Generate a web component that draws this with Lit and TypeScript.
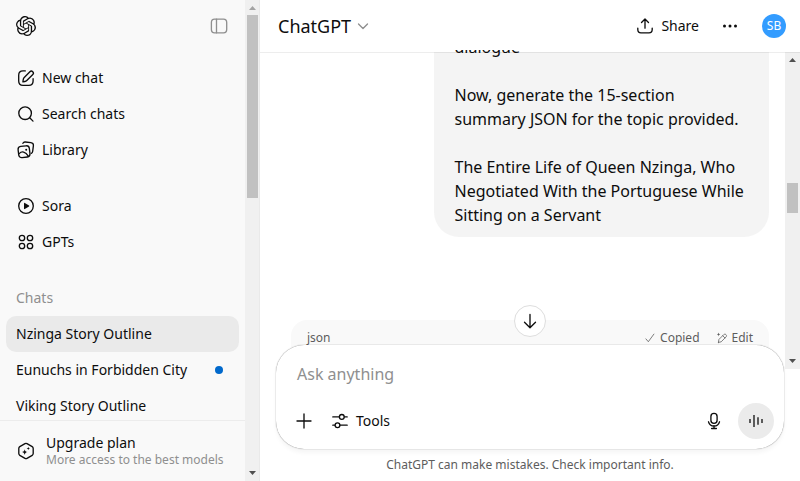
import { LitElement, html, css, svg } from "lit";
import { customElement } from "lit/decorators.js";

const LOGO =
  "M22.2819 9.8211a5.9847 5.9847 0 0 0-.5157-4.9108 6.0462 6.0462 0 0 0-6.5098-2.9A6.0651 6.0651 0 0 0 4.9807 4.1818a5.9847 5.9847 0 0 0-3.9977 2.9 6.0462 6.0462 0 0 0 .7427 7.0966 5.98 5.98 0 0 0 .511 4.9107 6.051 6.051 0 0 0 6.5146 2.9001A5.9847 5.9847 0 0 0 13.2599 24a6.0557 6.0557 0 0 0 5.7718-4.2058 5.9894 5.9894 0 0 0 3.9977-2.9001 6.0557 6.0557 0 0 0-.7475-7.0729zm-9.022 12.6081a4.4755 4.4755 0 0 1-2.8764-1.0408l.1419-.0804 4.7783-2.7582a.7948.7948 0 0 0 .3927-.6813v-6.7369l2.02 1.1686a.071.071 0 0 1 .038.052v5.5826a4.504 4.504 0 0 1-4.4945 4.4944zm-9.6607-4.1254a4.4708 4.4708 0 0 1-.5346-3.0137l.142.0852 4.783 2.7582a.7712.7712 0 0 0 .7806 0l5.8428-3.3685v2.3324a.0804.0804 0 0 1-.0332.0615L9.74 19.9502a4.4992 4.4992 0 0 1-6.1408-1.6464zM2.3408 7.8956a4.485 4.485 0 0 1 2.3655-1.9728V11.6a.7664.7664 0 0 0 .3879.6765l5.8144 3.3543-2.0201 1.1685a.0757.0757 0 0 1-.071 0l-4.8303-2.7865A4.504 4.504 0 0 1 2.3408 7.872zm16.5963 3.8558L13.1038 8.364 15.1192 7.2a.0757.0757 0 0 1 .071 0l4.8303 2.7913a4.4944 4.4944 0 0 1-.6765 8.1042v-5.6772a.79.79 0 0 0-.407-.667zm2.0107-3.0231l-.142-.0852-4.7735-2.7818a.7759.7759 0 0 0-.7854 0L9.409 9.2297V6.8974a.0662.0662 0 0 1 .0284-.0615l4.8303-2.7866a4.4992 4.4992 0 0 1 6.6802 4.66zM8.3065 12.863l-2.02-1.1638a.0804.0804 0 0 1-.038-.0567V6.0742a4.4992 4.4992 0 0 1 7.3757-3.4537l-.142.0805L8.704 5.459a.7948.7948 0 0 0-.3927.6813zm1.0976-2.3654l2.602-1.4998 2.6069 1.4998v2.9994l-2.5974 1.4997-2.6067-1.4997Z";

// Glyphs are drawn on a 20x20 grid with a 1.33 stroke.
const glyphs = {
  panel: svg`<rect x="2.4" y="3.2" width="15.3" height="13.6" rx="3.2"/><path d="M7.500 3.2v13.6"/>`,
  edit: svg`<path d="M9.3 2.9H7C4.3 2.9 2.7 4.500 2.700 7.200V13c0 2.700 1.600 4.300 4.300 4.300h5.800c2.700 0 4.300-1.600 4.300-4.300v-2.300"/><path d="M8 9.700l5.900-6a2 2 0 0 1 2.900 2.800l-6 6c-.5.500-1.200.900-1.900 1l-2 .300.300-2c.100-.8.300-1.600.8-2.100z"/>`,
  search: svg`<circle cx="9.100" cy="9.200" r="6.300"/><path d="M13.700 13.800L17.000 17.100"/>`,
  library: svg`<rect x="2.400" y="6.100" width="11.300" height="11.300" rx="3" transform="rotate(-7 8 11.800)"/><path d="M6.900 3.300c.5-1 1.300-1.400 2.300-1.300l5.700.6c1.700.2 2.700 1.300 2.500 3l-.7 5.600c-.1 1-.5 1.700-1.300 2.100"/><path d="M3.200 13.600c2.500-2.600 6.200-2.400 9.300 2.800"/><circle class="solid" cx="10.200" cy="9.800" r="1.000"/>`,
  play: svg`<circle cx="10" cy="10" r="7.300"/><path class="solid" d="M8 7.400v5.200c0 .5.400.7.800.5l4.200-2.600c.4-.3.400-.7 0-1L8.800 6.900c-.4-.2-.8 0-.8.500z"/>`,
  grid: svg`<circle cx="6" cy="6" r="2.700"/><circle cx="14" cy="6" r="2.700"/><circle cx="6" cy="14" r="2.700"/><circle cx="14" cy="14" r="2.700"/>`,
  upgrade: svg`<path d="M9 2.700a2 2 0 0 1 2 0l5.200 3a2 2 0 0 1 1 1.700v5.200a2 2 0 0 1-1 1.700l-5.200 3a2 2 0 0 1-2 0l-5.200-3a2 2 0 0 1-1-1.700V7.400a2 2 0 0 1 1-1.700z"/><path class="solid" d="M8.700 8.200c.4 1.900.9 2.500 2.800 2.900-1.900.4-2.400 1-2.800 2.900-.4-1.900-1-2.500-2.900-2.900 1.900-.4 2.500-1 2.900-2.900zM12.300 5.700c.3 1.100.6 1.500 1.700 1.700-1.100.3-1.400.6-1.700 1.700-.2-1.100-.6-1.400-1.700-1.700 1.100-.2 1.500-.6 1.700-1.700z"/>`,
  share: svg`<path d="M2.800 12.200v1.300c0 2 1.200 3.300 3.200 3.300h8c2 0 3.200-1.300 3.200-3.300v-1.300"/><path d="M10 12.200V3.200M6.500 6.500L10 3.000l3.500 3.500"/>`,
  dots: svg`<g class="solid"><circle cx="4.500" cy="10" r="1.500"/><circle cx="10" cy="10" r="1.500"/><circle cx="15.500" cy="10" r="1.500"/></g>`,
  down: svg`<path d="M10 3.500v13M4.500 11.200l5.500 5.500 5.500-5.500"/>`,
  plus: svg`<path d="M10 3v14M3 10h14"/>`,
  tools: svg`<path d="M2.800 5.900h6M14.600 5.900h2.600M2.800 14.200h1.700M10.200 14.200h7"/><circle cx="11.800" cy="5.900" r="2.400"/><circle cx="7.500" cy="14.200" r="2.400"/>`,
  mic: svg`<rect x="6.900" y="2.300" width="6.200" height="10.000" rx="3.100"/><path d="M4.500 10.800a5.700 5.700 0 0 0 11 0M10 14.700v2.600M7.600 17.500h4.800"/>`,
  voice: svg`<path d="M4 8v4M8 4v12M12 6.300v7.400M16 8v4"/>`,
  check: svg`<path d="M3.200 11.500l4 4.700L16.500 3.500"/>`,
  magic: svg`<path d="M4 17.300l.9-4.900 8-8c2.600-2.300 6.300 1.200 3.800 3.800l-8.100 8.200-4.600.9zM11.200 6.200l3.700 3.700"/><path class="solid" d="M4.300 1c.4 2.100.9 2.800 3 3.200-2.100.4-2.600 1-3 3.100-.4-2.100-.9-2.700-3-3.100 2.100-.4 2.600-1.100 3-3.200z"/>`,
};

const icon = (name: keyof typeof glyphs, extra = "") =>
  html`<svg class="icon ${extra}" viewBox="0 0 20 20">${glyphs[name]}</svg>`;

@customElement("scroll-track")
class ScrollTrack extends LitElement {
  static properties = { top: { type: Number }, size: { type: Number }, atstart: { type: Boolean } };
  declare top: number;
  declare size: number;
  declare atstart: boolean;

  static styles = css`
    :host { display: flex; flex-direction: column; flex: none; width: 15px; background: #f0f0f0; }
    .cap { flex: none; height: 15px; display: flex; justify-content: center; align-items: flex-start; padding-top: 5px; }
    .up { padding-top: 6px; }
    .cap, .lane { box-sizing: border-box; }
    .cap svg { width: 7px; height: 4px; fill: #505050; }
    .cap .dim { fill: #a3a3a3; }
    .lane { flex: 1; padding: 0 2px; }
    .thumb { background: #c1c1c1; }
  `;

  render() {
    return html`
      <div class="cap up"><svg class=${this.atstart ? "dim" : ""} viewBox="0 0 7 4"><path d="M0 4L3.500 0L7 4z"/></svg></div>
      <div class="lane"><div class="thumb" style="margin-top:${this.top}px;height:${this.size}px"></div></div>
      <div class="cap"><svg viewBox="0 0 7 4"><path d="M0 0L3.500 4L7 0z"/></svg></div>
    `;
  }
}

@customElement("app-root")
class AppRoot extends LitElement {
  static styles = css`
    :host { display: flex; width: 800px; height: 481px; overflow: hidden; background: #fff; color: #0d0d0d;
      font: 14px/20px "Noto Sans", sans-serif; }
    * { box-sizing: border-box; }
    .icon { width: 20px; height: 20px; flex: none; fill: none; stroke: currentColor; stroke-width: 1.33;
      stroke-linecap: round; stroke-linejoin: round; }
    .solid { fill: currentColor; stroke: none; }
    .muted { color: #8f8f8f; }

    .sidebar { display: flex; flex: none; width: 260px; background: #f9f9f9; }
    .rail { flex: 1; min-width: 0; display: flex; flex-direction: column; }
    .rail + scroll-track { box-shadow: inset -1px 0 #e9e9e9; }
    .top { height: 52px; padding: 0 16px; display: flex; flex: none; align-items: center; justify-content: space-between; }
    .logo { width: 20px; height: 20px; fill: #0d0d0d; }
    .nav { flex: 1; min-height: 0; overflow: hidden; padding: 8px 6px 0; }
    .row { height: 36px; padding: 0 10px; display: flex; align-items: center; gap: 6px; border-radius: 10px; white-space: nowrap; }
    .group { margin-bottom: 20px; }
    .active { background: #eaeaea; }
    .dot { width: 8px; height: 8px; border-radius: 50%; background: #0169cc; margin: 0 6px 0 auto; }
    .plan { flex: none; height: 61px; border-top: 1px solid #ececec; padding: 0 16px; display: flex; align-items: center; gap: 10px; }
    .plan p { margin: 0; line-height: 18px; white-space: nowrap; }
    .plan .muted { font-size: 12px; line-height: 16px; }

    .main { flex: 1; min-width: 0; display: flex; flex-direction: column; }
    .header { position: relative; z-index: 1; flex: none; height: 53px; border-bottom: 1px solid rgba(0, 0, 0, .07);
      padding: 0 14px 0 18px; display: flex; align-items: center; }
    .title { font-size: 18px; line-height: 28px; }
    .chevron { width: 12px; height: 12px; margin-left: 6px; color: #8f8f8f; }
    .share { margin-left: auto; display: flex; align-items: center; gap: 6px; }
    .more { margin: 0 22px 0 21px; }
    .avatar { width: 24px; height: 24px; border-radius: 50%; background: #339cff; color: #fff; font-size: 12px;
      line-height: 24px; text-align: center; }
    .thread { flex: none; height: 319px; margin-top: -3px; display: flex; }
    .thread scroll-track { margin-top: 2px; }
    .feed { flex: 1; overflow: hidden; padding: 0 16px 0 31px; display: flex; flex-direction: column; align-items: flex-end; }
    .bubble { flex: none; width: 335px; height: 207px; margin-top: -20px; padding: 0 20px 10px 20.5px; border-radius: 0 0 25px 25px;
      background: linear-gradient(transparent 22px, #f4f4f4 22px); font-size: 16px; line-height: 24px;
      display: flex; flex-direction: column; justify-content: flex-end; gap: 24px; }
    .bubble p { margin: 0; white-space: nowrap; }
    .code { flex: none; align-self: stretch; height: 60px; margin-top: 83px; padding: 10px 16px; border-radius: 16px 16px 0 0;
      background: #f9f9f9; color: #5d5d5d; font-size: 12px; line-height: 16px; display: flex; align-items: flex-start; }
    .action { display: flex; align-items: center; gap: 4px; }
    .action .icon { width: 12px; height: 12px; }
    .action:nth-child(2) { margin-left: auto; margin-right: 16px; }

    .dock { position: relative; margin: -24px 16px 0; }
    .composer { height: 104px; border-radius: 28px; background: #fff;
      box-shadow: 0 4px 4px rgba(0, 0, 0, .04), 0 0 1px rgba(0, 0, 0, .62);
      padding: 16px 10px 10px 18px; display: flex; flex-direction: column; justify-content: space-between; }
    .prompt { font-size: 16px; line-height: 24px; padding: 1px 3px 0; }
    .bar { display: flex; align-items: center; height: 36px; }
    .tools { display: flex; align-items: center; gap: 6px; margin-left: 16px; }
    .mic { margin-left: auto; }
    .voice { margin-left: 14px; width: 36px; height: 36px; border-radius: 50%; background: #ebebeb; color: #4d4d4d;
      display: flex; align-items: center; justify-content: center; }
    .voice .icon { stroke-width: 1.800; stroke-linecap: butt; }
    .jump { position: absolute; left: 50%; top: -40px; margin-left: -16px; width: 32px; height: 32px; border: 1px solid #dedede;
      border-radius: 50%; background: #fff; display: flex; align-items: center; justify-content: center; }
    .note { margin: 0; padding-top: 8px; text-align: center; font-size: 12px; line-height: 16px; color: #5d5d5d; }
  `;

  render() {
    return html`
      <aside class="sidebar">
        <div class="rail">
          <div class="top">
            <svg class="logo" viewBox="0 0 24 24"><path d=${LOGO}/></svg>
            ${icon("panel", "muted")}
          </div>
          <nav class="nav">
            <div class="group">
              <div class="row">${icon("edit")}New chat</div>
              <div class="row">${icon("search")}Search chats</div>
              <div class="row">${icon("library")}Library</div>
            </div>
            <div class="group">
              <div class="row">${icon("play")}Sora</div>
              <div class="row">${icon("grid")}GPTs</div>
            </div>
            <div class="row muted">Chats</div>
            <div class="row active">Nzinga Story Outline</div>
            <div class="row">Eunuchs in Forbidden City<span class="dot"></span></div>
            <div class="row">Viking Story Outline</div>
          </nav>
          <div class="plan">
            ${icon("upgrade")}
            <div><p>Upgrade plan</p><p class="muted">More access to the best models</p></div>
          </div>
        </div>
        <scroll-track .top=${0} .size=${183} .atstart=${true}></scroll-track>
      </aside>
      <main class="main">
        <header class="header">
          <span class="title">ChatGPT</span>
          <svg class="icon chevron" viewBox="0 0 12 12"><path d="M1.500 4L6 8.500 10.500 4"/></svg>
          <div class="share">${icon("share")}Share</div>
          ${icon("dots", "more")}
          <div class="avatar">SB</div>
        </header>
        <section class="thread">
          <div class="feed">
            <div class="bubble">
              <p>dialogue</p>
              <p>Now, generate the 15-section<br />summary JSON for the topic provided.</p>
              <p>The Entire Life of Queen Nzinga, Who<br />Negotiated With the Portuguese While<br />Sitting on a Servant</p>
            </div>
            <div class="code">
              <span>json</span>
              <span class="action">${icon("check")}Copied</span>
              <span class="action">${icon("magic")}Edit</span>
            </div>
          </div>
          <scroll-track .top=${116} .size=${30} .atstart=${false}></scroll-track>
        </section>
        <div class="dock">
          <div class="composer">
            <div class="prompt muted">Ask anything</div>
            <div class="bar">
              ${icon("plus")}
              <div class="tools">${icon("tools")}Tools</div>
              ${icon("mic", "mic")}
              <div class="voice">${icon("voice")}</div>
            </div>
          </div>
          <div class="jump">${icon("down")}</div>
          <p class="note">ChatGPT can make mistakes. Check important info.</p>
        </div>
      </main>
    `;
  }
}
